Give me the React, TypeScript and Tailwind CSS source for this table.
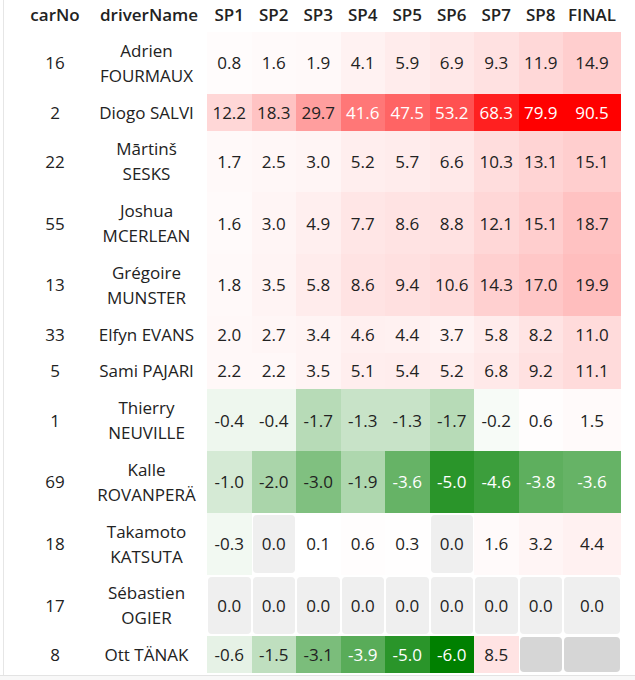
import React from "react";

type Row = { car: string; name: string[]; vals: (number | null)[] };

const rows: Row[] = [
  { car: "16", name: ["Adrien", "FOURMAUX"], vals: [0.8, 1.6, 1.9, 4.1, 5.9, 6.9, 9.3, 11.9, 14.9] },
  { car: "2", name: ["Diogo SALVI"], vals: [12.2, 18.3, 29.7, 41.6, 47.5, 53.2, 68.3, 79.9, 90.5] },
  { car: "22", name: ["Mārtinš", "SESKS"], vals: [1.7, 2.5, 3.0, 5.2, 5.7, 6.6, 10.3, 13.1, 15.1] },
  { car: "55", name: ["Joshua", "MCERLEAN"], vals: [1.6, 3.0, 4.9, 7.7, 8.6, 8.8, 12.1, 15.1, 18.7] },
  { car: "13", name: ["Grégoire", "MUNSTER"], vals: [1.8, 3.5, 5.8, 8.6, 9.4, 10.6, 14.3, 17.0, 19.9] },
  { car: "33", name: ["Elfyn EVANS"], vals: [2.0, 2.7, 3.4, 4.6, 4.4, 3.7, 5.8, 8.2, 11.0] },
  { car: "5", name: ["Sami PAJARI"], vals: [2.2, 2.2, 3.5, 5.1, 5.4, 5.2, 6.8, 9.2, 11.1] },
  { car: "1", name: ["Thierry", "NEUVILLE"], vals: [-0.4, -0.4, -1.7, -1.3, -1.3, -1.7, -0.2, 0.6, 1.5] },
  { car: "69", name: ["Kalle", "ROVANPERÄ"], vals: [-1.0, -2.0, -3.0, -1.9, -3.6, -5.0, -4.6, -3.8, -3.6] },
  { car: "18", name: ["Takamoto", "KATSUTA"], vals: [-0.3, 0.0, 0.1, 0.6, 0.3, 0.0, 1.6, 3.2, 4.4] },
  { car: "17", name: ["Sébastien", "OGIER"], vals: [0, 0, 0, 0, 0, 0, 0, 0, 0] },
  { car: "8", name: ["Ott TÄNAK"], vals: [-0.6, -1.5, -3.1, -3.9, -5.0, -6.0, 8.5, null, null] },
];

const headers = ["SP1", "SP2", "SP3", "SP4", "SP5", "SP6", "SP7", "SP8", "FINAL"];

const lin = (c: number) => {
  const s = c / 255;
  return s <= 0.04045 ? s / 12.92 : Math.pow((s + 0.055) / 1.055, 2.4);
};

function colorFor(v: number) {
  let r: number, g: number, b: number;
  if (v > 0) {
    const f = Math.min(v / 78, 1);
    r = 255;
    g = Math.round(255 * (1 - f));
    b = g;
  } else {
    const f = Math.min(-v / 6, 1);
    r = Math.round(255 * (1 - f));
    b = r;
    g = Math.round(255 - 127 * f);
  }
  const L = 0.2126 * lin(r) + 0.7152 * lin(g) + 0.0722 * lin(b);
  return { bg: `rgb(${r},${g},${b})`, fg: L < 0.4 ? "#ffffff" : "#222222" };
}

const gridCols = "grid grid-cols-[96px_107px_repeat(8,44.5px)_58px]";

function ValueCell({ v }: { v: number | null }) {
  if (v === null) {
    return (
      <div className="px-px py-px">
        <div className="h-full rounded-[4px] bg-[#d6d6d6]" />
      </div>
    );
  }
  if (v === 0) {
    return (
      <div className="px-px py-[2px]">
        <div className="h-full rounded-[4px] bg-[#efefef] flex items-center justify-center">0.0</div>
      </div>
    );
  }
  const c = colorFor(v);
  return (
    <div className="flex items-center justify-center" style={{ backgroundColor: c.bg, color: c.fg }}>
      {v.toFixed(1)}
    </div>
  );
}

export default function App() {
  return (
    <div
      className="w-[635px] h-[680px] bg-white text-[#222] text-[17px] leading-[25px] overflow-hidden flex flex-col"
      style={{ fontFamily: '"Open Sans", "Noto Sans", sans-serif' }}
    >
      <div className="ml-[3px] border-l border-[#e6e6e6] flex-1 flex flex-col">
        <div className={`${gridCols} h-[32px] pt-[2px] font-semibold`}>
          <div className="pl-[6px] text-center">carNo</div>
          <div className="pr-[14px] text-center">driverName</div>
          {headers.map((h) => (
            <div key={h} className="text-center">
              {h}
            </div>
          ))}
        </div>
        {rows.map((row) => (
          <div
            key={row.car}
            className={`${gridCols} ${row.name.length > 1 ? "h-[61.75px]" : "h-[36.75px]"}`}
          >
            <div className="pl-[6px] flex items-center justify-center">{row.car}</div>
            <div className="pr-[14px] flex flex-col items-center justify-center text-center whitespace-nowrap">
              {row.name.map((n) => (
                <span key={n}>{n}</span>
              ))}
            </div>
            {row.vals.map((v, i) => (
              <ValueCell key={i} v={v} />
            ))}
          </div>
        ))}
        <div className="flex-1" />
      </div>
      <div className="h-[5px] border-t border-[#e3e3e3] bg-[#f8f8f8]" />
    </div>
  );
}
